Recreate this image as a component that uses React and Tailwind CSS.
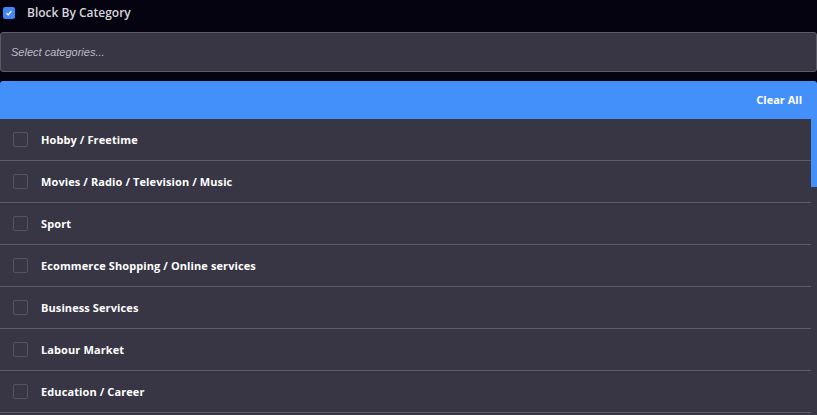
export default function App() {
  const items = ["Hobby / Freetime","Movies / Radio / Television / Music","Sport","Ecommerce Shopping / Online services","Business Services","Labour Market","Education / Career"];
  return (
    <div className="w-[817px] h-[415px] overflow-hidden bg-[#04030f] text-white" style={{fontFamily:'"Open Sans", sans-serif'}}>
      <div className="flex items-center h-[25px] pl-[3px] gap-[12px]">
        <div className="w-[12px] h-[12px] rounded-[2px] bg-[#3f87f5] flex items-center justify-center">
          <svg width="8" height="8" viewBox="0 0 8 8"><path d="M1.5 4.2 L3.2 5.8 L6.5 2" stroke="white" strokeWidth="1.2" fill="none"/></svg>
        </div>
        <span className="text-[12px] font-semibold text-[#d6d5dc]">Block By Category</span>
      </div>
      <div className="mt-[7px] h-[40px] rounded-[3px] border border-[#5b5a66] bg-[#383645] flex items-center px-[10px]">
        <span className="text-[11px] italic text-[#bdbcc5]" style={{fontFamily:'"Liberation Sans", sans-serif'}}>Select categories...</span>
      </div>
      <div className="mt-[9px] rounded-t-[3px] bg-[#4390fb] flex flex-col">
        <div className="h-[38px] flex items-center justify-end pr-[15px]">
          <span className="text-[11px] font-bold">Clear All</span>
        </div>
        <div className="flex">
          <div className="w-[811px] bg-[#383645]">
            {items.map((t) => (
              <div key={t} className="h-[42px] border-b border-[#5e5c69] flex items-center pl-[13px] gap-[13px]">
                <div className="w-[15px] h-[15px] rounded-[2px] border border-[#55535f]"></div>
                <span className="text-[11px] font-bold text-white pt-[2px] tracking-[0.1px]">{t}</span>
              </div>
            ))}
            <div className="h-[20px]"></div>
          </div>
          <div className="w-[6px] bg-[#383645] flex flex-col">
            <div className="h-[68px] bg-[#4390fb]"></div>
          </div>
        </div>
      </div>
    </div>
  );
}
